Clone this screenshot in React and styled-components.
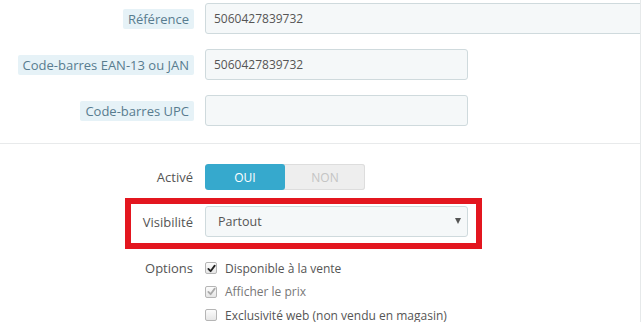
import React from "react";
import styled, { createGlobalStyle } from "styled-components";

const Global = createGlobalStyle`
  html, body { margin: 0; padding: 0; background: #fff; }
  body { font-family: "Open Sans", "Noto Sans", sans-serif; font-size: 12px; color: #555; }
`;

const Page = styled.div`
  width: 641px;
  height: 322px;
  box-sizing: border-box;
  border-right: 1px solid #e6e9ea;
  overflow: hidden;
  padding-top: 3px;
`;

const Section = styled.div`
  display: flex;
  flex-direction: column;
  gap: ${(p) => p.$gap}px;
  padding-bottom: ${(p) => p.$pb || 0}px;
  padding-top: ${(p) => p.$pt || 0}px;
`;

const Divider = styled.hr`
  margin: 0;
  border: 0;
  border-top: 1px solid #e8eaeb;
  width: 640px;
`;

const Row = styled.div`
  position: relative;
  display: grid;
  grid-template-columns: 194px 1fr;
  column-gap: 11px;
  align-items: ${(p) => p.$align || "center"};
  margin-top: ${(p) => p.$mt || 0}px;
`;

const LabelCell = styled.div`
  display: flex;
  justify-content: flex-end;
  align-items: center;
`;

const TipLabel = styled.span`
  display: inline-block;
  background: #e6f2f7;
  color: #587c8f;
  font-size: 13px;
  padding: 0 5px;
  height: 20px;
  line-height: 20px;
  border-radius: 2px;
  white-space: nowrap;
`;

const PlainLabel = styled.span`
  color: #555;
  font-size: 13px;
  padding-right: 1px;
  white-space: nowrap;
  line-height: 20px;
`;

const Input = styled.div`
  box-sizing: border-box;
  height: 31px;
  width: ${(p) => p.$w}px;
  background: #f5f8f9;
  border: 1px solid #cfdadd;
  border-radius: 3px;
  padding: 0 8px;
  display: flex;
  align-items: center;
  color: #555;
  font-size: 12px;
`;

const Toggle = styled.div`
  display: flex;
  width: 160px;
  height: 26px;
  border-radius: 3px;
  overflow: hidden;
  background: #eee;
  box-shadow: inset 0 0 0 1px #ddd;
`;

const ToggleOpt = styled.div`
  flex: 1;
  display: flex;
  align-items: center;
  justify-content: center;
  font-size: 12px;
  text-transform: uppercase;
  color: ${(p) => (p.$on ? "#fff" : "#c4c4c4")};
  background: ${(p) => (p.$on ? "#36a9cd" : "transparent")};
  border-radius: ${(p) => (p.$on ? "3px" : "0")};
`;

const Select = styled(Input)`
  justify-content: space-between;
  padding: 0 6px 0 12px;
  font-size: 12.5px;
`;

const Caret = styled.span`
  width: 0;
  height: 0;
  border-left: 3.5px solid transparent;
  border-right: 3.5px solid transparent;
  border-top: 6px solid #555;
  margin-top: -2px;
`;

const Highlight = styled.div`
  position: absolute;
  left: 125px;
  top: -8px;
  width: 357px;
  height: 51px;
  box-sizing: border-box;
  border: 6px solid #e3161f;
  pointer-events: none;
`;

const OptionList = styled.div`
  display: flex;
  flex-direction: column;
  gap: 3.5px;
`;

const OptionRow = styled.label`
  display: flex;
  align-items: center;
  gap: 8px;
  height: 20px;
  font-size: 12px;
  color: ${(p) => (p.$disabled ? "#777" : "#555")};
  white-space: nowrap;
`;

const Box = styled.span`
  box-sizing: border-box;
  width: 12px;
  height: 12px;
  border: 1px solid #b5b5b5;
  border-radius: 2px;
  background: linear-gradient(#fcfcfc, #e6e6e6);
  display: flex;
  align-items: center;
  justify-content: center;
  flex: none;
`;

const Check = ({ color }) => (
  <svg width="9" height="9" viewBox="0 0 10 10">
    <path d="M1.5 5.4 L4 8 L8.6 1.8" fill="none" stroke={color} strokeWidth="2" strokeLinecap="round" strokeLinejoin="round" />
  </svg>
);

const Checkbox = ({ checked, disabled }) => (
  <Box>{checked && <Check color={disabled ? "#aaa" : "#222"} />}</Box>
);

export default function App() {
  return (
    <>
      <Global />
      <Page>
        <Section $gap={15} $pb={17}>
          <Row>
            <LabelCell><TipLabel>Référence</TipLabel></LabelCell>
            <Input $w={460}>5060427839732</Input>
          </Row>
          <Row>
            <LabelCell><TipLabel>Code-barres EAN-13 ou JAN</TipLabel></LabelCell>
            <Input $w={263}>5060427839732</Input>
          </Row>
          <Row>
            <LabelCell><TipLabel>Code-barres UPC</TipLabel></LabelCell>
            <Input $w={263} />
          </Row>
        </Section>
        <Divider />
        <Section $gap={16} $pt={20}>
          <Row>
            <LabelCell><PlainLabel>Activé</PlainLabel></LabelCell>
            <Toggle>
              <ToggleOpt $on>Oui</ToggleOpt>
              <ToggleOpt>Non</ToggleOpt>
            </Toggle>
          </Row>
          <Row>
            <LabelCell><PlainLabel>Visibilité</PlainLabel></LabelCell>
            <Select $w={263}>
              <span>Partout</span>
              <Caret />
            </Select>
            <Highlight />
          </Row>
          <Row $align="start" $mt={5}>
            <LabelCell><PlainLabel>Options</PlainLabel></LabelCell>
            <OptionList>
              <OptionRow><Checkbox checked />Disponible à la vente</OptionRow>
              <OptionRow $disabled><Checkbox checked disabled />Afficher le prix</OptionRow>
              <OptionRow><Checkbox />Exclusivité web (non vendu en magasin)</OptionRow>
            </OptionList>
          </Row>
        </Section>
      </Page>
    </>
  );
}
